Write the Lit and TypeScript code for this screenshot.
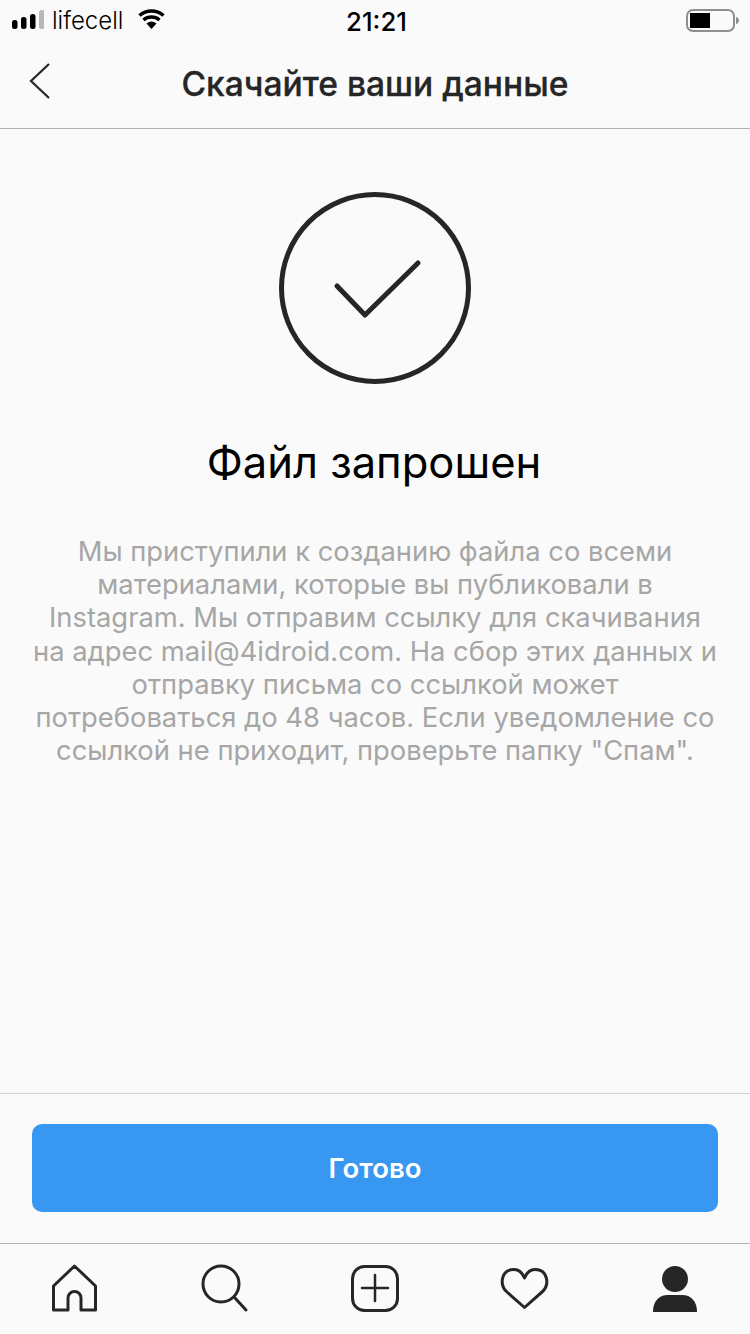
import { LitElement, html, css } from "lit";
import { customElement } from "lit/decorators.js";

@customElement("app-root")
export class AppRoot extends LitElement {
  static styles = css`
    :host {
      display: block;
      width: 750px;
      height: 1334px;
      background: #fafafa;
      font-family: Inter, "Liberation Sans", sans-serif;
      color: #262626;
    }
    .page {
      display: flex;
      flex-direction: column;
      height: 1334px;
    }
    .status {
      box-sizing: border-box;
      display: grid;
      grid-template-columns: 1fr auto 1fr;
      align-items: center;
      height: 40px;
      padding: 2px 10px 0 12px;
      color: #000;
    }
    .status-left {
      display: flex;
      align-items: center;
      gap: 8px;
      font-size: 24px;
      font-weight: 300;
    }
    .carrier {
      margin-right: 7px;
      margin-top: -2px;
    }
    .status-right {
      display: flex;
      justify-content: flex-end;
    }
    .time {
      font-size: 25.700px;
      font-weight: 500;
      padding-left: 1px;
    }
    .header {
      box-sizing: border-box;
      position: relative;
      display: flex;
      align-items: center;
      justify-content: center;
      height: 89px;
      padding-bottom: 2px;
      border-bottom: 1px solid #b2b2b2;
    }
    .header h1 {
      margin: 0;
      font-size: 33.600px;
      font-weight: 500;
      -webkit-text-stroke: 0.3px #262626;
    }
    .back {
      position: absolute;
      left: 29px;
      top: 22px;
    }
    .content {
      flex: 1;
      display: flex;
      flex-direction: column;
      align-items: center;
      padding-top: 63px;
    }
    .done-title {
      margin: 48px 2px 0 0;
      font-size: 43.500px;
      font-weight: 400;
      line-height: 60px;
      color: #000;
    }
    .desc {
      margin: 43px 0 0;
      font-size: 27.350px;
      line-height: 33.200px;
      color: #a6a6a6;
      text-align: center;
      white-space: nowrap;
    }
    .action {
      border-top: 1px solid #d0d0d0;
      padding: 30px 32px 31px;
    }
    .btn {
      display: flex;
      align-items: center;
      justify-content: center;
      height: 88px;
      background: #3897f0;
      border-radius: 10px;
      color: #fff;
      font-size: 27.500px;
      font-weight: 600;
    }
    .tabs {
      display: block;
      border-top: 1px solid #b2b2b2;
      height: 90px;
    }
    svg {
      display: block;
    }
  `;

  render() {
    return html`
      <div class="page">
        <div class="status">
          <div class="status-left">
            <svg width="32" height="24" viewBox="0 0 32 24">
              <rect x="0" y="11" width="5.500" height="9" rx="2.500" fill="#000" />
              <rect x="9" y="8" width="5.500" height="12" rx="2.500" fill="#000" />
              <rect x="18" y="5" width="5.500" height="15" rx="2.500" fill="#000" />
              <rect x="27" y="1" width="5.500" height="19" rx="2.500" fill="#b8b8b8" />
            </svg>
            <span class="carrier">lifecell</span>
            <svg width="27" height="24" viewBox="0 0 27 24">
              <path d="M13.500 20l-5-5.500a8 8 0 0 1 10 0z" fill="#000" />
              <path d="M5.500 11a12.500 12.500 0 0 1 16 0" fill="none" stroke="#000" stroke-width="3.500" />
              <path d="M1.500 6.500a18.500 18.500 0 0 1 24 0" fill="none" stroke="#000" stroke-width="3.500" />
            </svg>
          </div>
          <div class="time">21:21</div>
          <div class="status-right">
            <svg width="54" height="24" viewBox="0 0 54 24">
              <rect x="1" y="1" width="47" height="21" rx="6" fill="none" stroke="#8e8e8e" stroke-width="2" />
              <rect x="4" y="4" width="20" height="15" fill="#000" />
              <path d="M50 8c2 .5 3 2 3 3.500s-1 3-3 3.500z" fill="#8e8e8e" />
            </svg>
          </div>
        </div>
        <div class="header">
          <svg class="back" width="22" height="38" viewBox="0 0 22 38">
            <path d="M20 2L2 19l18 17" fill="none" stroke="#262626" stroke-width="2.200" />
          </svg>
          <h1>Скачайте ваши данные</h1>
        </div>
        <div class="content">
          <svg width="192" height="192" viewBox="0 0 192 192">
            <circle cx="96" cy="96" r="93.500" fill="none" stroke="#262626" stroke-width="5" />
            <path
              d="M58 94L86 123L139 71"
              fill="none"
              stroke="#262626"
              stroke-width="5"
              stroke-linecap="round"
              stroke-linejoin="round"
            />
          </svg>
          <h2 class="done-title">Файл запрошен</h2>
          <p class="desc">
            Мы приступили к созданию файла со всеми<br />
            материалами, которые вы публиковали в<br />
            Instagram. Мы отправим ссылку для скачивания<br />
            на адрес mail@4idroid.com. На сбор этих данных и<br />
            отправку письма со ссылкой может<br />
            потребоваться до 48 часов. Если уведомление со<br />
            ссылкой не приходит, проверьте папку "Спам".
          </p>
        </div>
        <div class="action">
          <div class="btn">Готово</div>
        </div>
        <svg class="tabs" width="750" height="90" viewBox="0 1244 750 90">
          <g fill="none" stroke="#262626" stroke-width="3" stroke-linejoin="round" stroke-linecap="round">
            <path d="M53.500 1310V1286L74.500 1266L95.500 1286V1310H81V1298a6.500 6.500 0 0 0-13 0V1310z" />
            <circle cx="221" cy="1284" r="18" />
            <path d="M235 1298L246 1310" />
            <rect x="352.500" y="1266.500" width="45" height="44" rx="12" />
            <path d="M362 1288H388M375 1275V1301" stroke-width="2.500" />
            <path d="M524.500 1307.500L507 1292C499 1285 501 1269.500 514 1269.500C519 1269.500 522.500 1273 524.500 1278C526.500 1273 530 1269.500 535 1269.500C548 1269.500 550 1285 542 1292z" />
          </g>
          <circle cx="675" cy="1279" r="13" fill="#262626" />
          <path d="M653 1312c0-11 6-17 15-17h14c9 0 15 6 15 17z" fill="#262626" />
        </svg>
      </div>
    `;
  }
}
